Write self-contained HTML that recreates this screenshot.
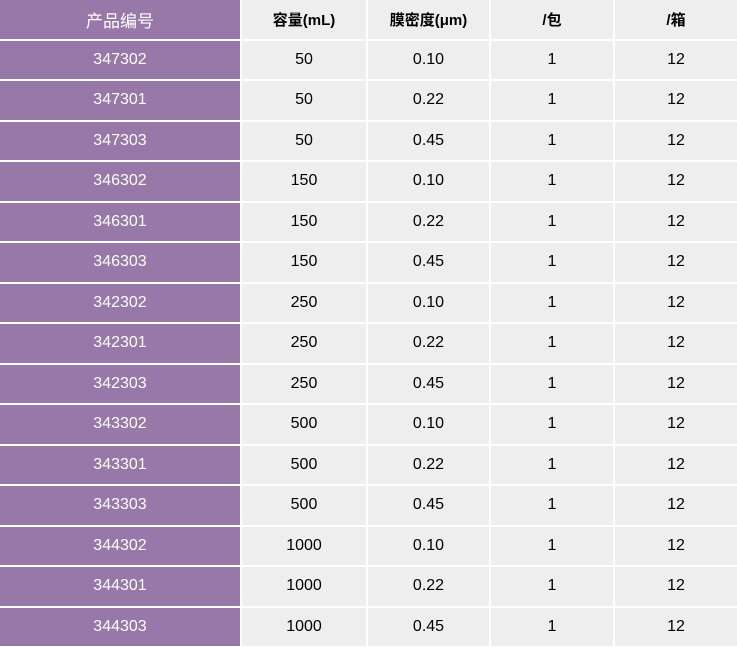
<!DOCTYPE html>
<html><head><meta charset="utf-8"><style>
html,body{margin:0;padding:0;background:#fff;width:737px;height:647px;overflow:hidden}
.g{display:grid;grid-template-columns:240px 124px 121px 122px 122px;grid-template-rows:repeat(16,38.5px);gap:2px;width:737px}
.g div{display:flex;align-items:center;justify-content:center;font-family:"Liberation Sans","Noto Sans CJK SC",sans-serif;font-size:16px;color:#000;background:#eeeeee}
.g div.p{background:#9778a8;color:#fff}
.g div.h{font-weight:bold;font-size:15px}
.g div.h.p{font-weight:normal;font-size:17px}
</style></head><body>
<div class="g">
<div class="p h">产品编号</div><div class="h">容量(mL)</div><div class="h">膜密度(μm)</div><div class="h">/包</div><div class="h">/箱</div>
<div class="p">347302</div><div>50</div><div>0.10</div><div>1</div><div>12</div>
<div class="p">347301</div><div>50</div><div>0.22</div><div>1</div><div>12</div>
<div class="p">347303</div><div>50</div><div>0.45</div><div>1</div><div>12</div>
<div class="p">346302</div><div>150</div><div>0.10</div><div>1</div><div>12</div>
<div class="p">346301</div><div>150</div><div>0.22</div><div>1</div><div>12</div>
<div class="p">346303</div><div>150</div><div>0.45</div><div>1</div><div>12</div>
<div class="p">342302</div><div>250</div><div>0.10</div><div>1</div><div>12</div>
<div class="p">342301</div><div>250</div><div>0.22</div><div>1</div><div>12</div>
<div class="p">342303</div><div>250</div><div>0.45</div><div>1</div><div>12</div>
<div class="p">343302</div><div>500</div><div>0.10</div><div>1</div><div>12</div>
<div class="p">343301</div><div>500</div><div>0.22</div><div>1</div><div>12</div>
<div class="p">343303</div><div>500</div><div>0.45</div><div>1</div><div>12</div>
<div class="p">344302</div><div>1000</div><div>0.10</div><div>1</div><div>12</div>
<div class="p">344301</div><div>1000</div><div>0.22</div><div>1</div><div>12</div>
<div class="p">344303</div><div>1000</div><div>0.45</div><div>1</div><div>12</div>
</div>
</body></html>
